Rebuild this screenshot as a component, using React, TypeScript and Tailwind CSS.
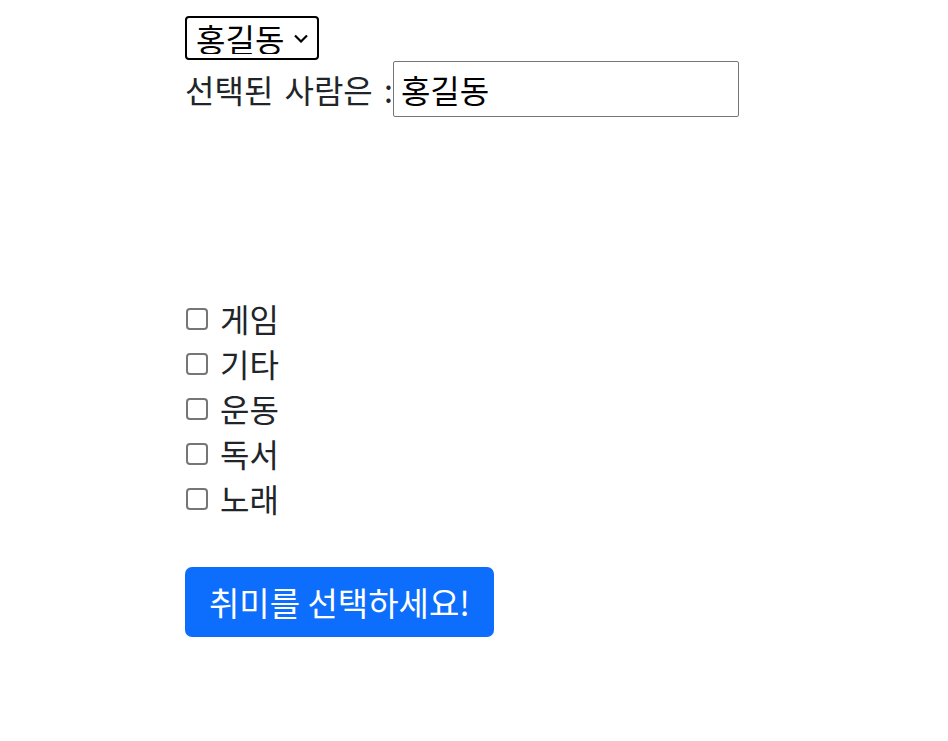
import { useState } from "react";

const hobbies = ["게임", "기타", "운동", "독서", "노래"];

export default function App() {
  const [person, setPerson] = useState("홍길동");
  const [checked, setChecked] = useState<string[]>([]);

  const toggle = (h: string) =>
    setChecked((c) => (c.includes(h) ? c.filter((x) => x !== h) : [...c, h]));

  return (
    <div className="min-h-[741px] bg-white pl-[185px] pt-[16px] font-['Noto_Sans_CJK_KR',sans-serif] text-[32px] leading-[45px] text-[#212529]">
      {/* 사람 선택 */}
      <div className="relative inline-flex h-[44px] w-[134px] items-center rounded-[4px] border-2 border-black text-black">
        <select
          value={person}
          onChange={(e) => setPerson(e.target.value)}
          className="h-full w-full appearance-none bg-transparent pl-[9px] leading-none outline-none"
        >
          <option>홍길동</option>
          <option>김철수</option>
          <option>이영희</option>
        </select>
        <svg
          className="pointer-events-none absolute right-[9px] top-[16px]"
          width="14"
          height="9"
          viewBox="0 0 14 9"
          fill="none"
          stroke="black"
          strokeWidth="2.2"
        >
          <path d="M1 1.5l6 6 6-6" />
        </svg>
      </div>

      <div className="flex items-center">
        <span className="[word-spacing:4px]">선택된 사람은 :</span>
        <input
          readOnly
          value={person}
          className="h-[56px] w-[346px] rounded-[2px] border border-[#767676] px-[7px] text-black outline-none"
        />
      </div>

      {/* 취미 */}
      <div className="mt-[179px] flex flex-col">
        {hobbies.map((h) => (
          <label key={h} className="flex h-[45px] items-center gap-[12px]">
            <input
              type="checkbox"
              checked={checked.includes(h)}
              onChange={() => toggle(h)}
              className="ml-[1px] h-[22px] w-[22px] appearance-none rounded-[4px] border-2 border-[#767676] bg-white checked:bg-[#0d6efd]"
            />
            <span>{h}</span>
          </label>
        ))}
      </div>

      <button className="mt-[46px] h-[70px] rounded-[7px] bg-[#0d6efd] px-[24px] text-[33px] text-white">
        취미를 선택하세요!
      </button>
    </div>
  );
}
